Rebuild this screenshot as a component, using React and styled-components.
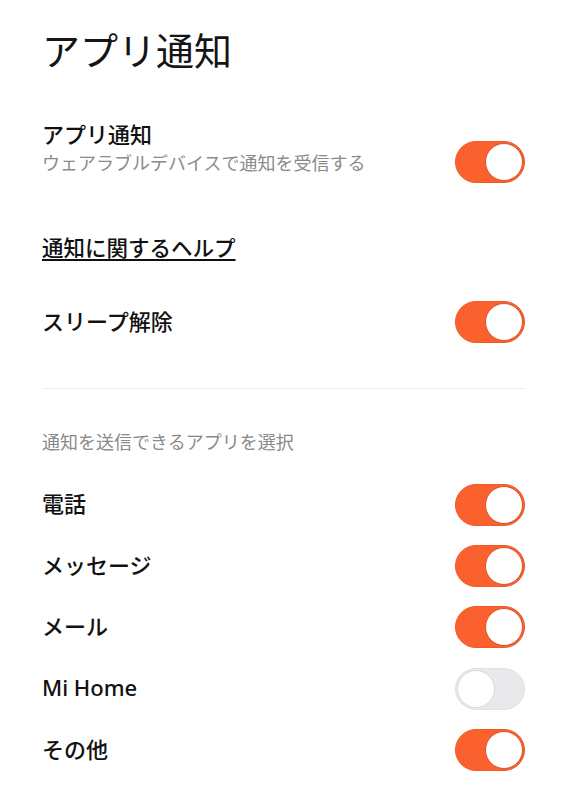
import React from "react";
import styled, { createGlobalStyle } from "styled-components";

const Global = createGlobalStyle`
  html, body { margin: 0; padding: 0; background: #ffffff; }
  body {
    font-family: "Noto Sans", "Noto Sans CJK JP", sans-serif;
    color: #111111;
    -webkit-font-smoothing: antialiased;
  }
`;

const Page = styled.div`
  width: 564px;
  min-height: 800px;
  box-sizing: border-box;
  padding: 26px 39px 0 42px;
  display: flex;
  flex-direction: column;
`;

const Title = styled.h1`
  margin: 0;
  font-size: 38px;
  line-height: 46px;
  font-weight: 400;
  color: #151515;
  font-family: "Noto Sans CJK JP", sans-serif;
`;

const Row = styled.div`
  display: flex;
  align-items: ${(p) => (p.$align === "end" ? "flex-end" : "center")};
  justify-content: space-between;
  margin-top: ${(p) => p.$mt || 0}px;
  min-height: ${(p) => p.$h || 0}px;
`;

const TextBlock = styled.div`
  display: flex;
  flex-direction: column;
`;

const Label = styled.div`
  font-family: "Noto Sans CJK JP", sans-serif;
  font-size: 22px;
  line-height: 32px;
  font-weight: 500;
  color: #111111;
  margin-bottom: ${(p) => p.$lift || 0}px;
`;

const ItemLabel = styled.div`
  font-family: "Noto Sans", "Noto Sans CJK JP", sans-serif;
  font-size: 22px;
  line-height: 32px;
  font-weight: 500;
  color: #111111;
  margin-bottom: 3px;
`;

const Sub = styled.div`
  font-family: "Noto Sans CJK JP", sans-serif;
  font-size: 18px;
  line-height: 26px;
  color: #8a8a8a;
  font-weight: 400;
`;

const HelpLink = styled.a`
  align-self: flex-start;
  margin-top: 56px;
  font-family: "Noto Sans CJK JP", sans-serif;
  font-size: 21.5px;
  line-height: 32px;
  font-weight: 500;
  color: #111111;
  text-decoration: underline;
  text-decoration-thickness: 2px;
  text-underline-offset: 3px;
  cursor: pointer;
`;

const Divider = styled.hr`
  margin: 45px 0 0 0;
  border: none;
  height: 1px;
  background: #eeeeee;
`;

const SectionHeader = styled.div`
  margin-top: 39px;
  font-family: "Noto Sans CJK JP", sans-serif;
  font-size: 18px;
  line-height: 26px;
  color: #8a8a8a;
`;

const List = styled.div`
  margin-top: 20px;
  display: flex;
  flex-direction: column;
`;

const ListRow = styled.div`
  display: flex;
  align-items: center;
  justify-content: space-between;
  height: 61.4px;
`;

const Track = styled.button`
  position: relative;
  flex: none;
  width: 70px;
  height: 42px;
  padding: 0;
  border-radius: 21px;
  border: 1px solid ${(p) => (p.$on ? "#ef5a28" : "#e2e2e4")};
  background: ${(p) => (p.$on ? "#fb612e" : "#e9e9eb")};
  box-sizing: border-box;
  cursor: pointer;
  margin-bottom: ${(p) => p.$mb || 0}px;
`;

const Knob = styled.span`
  position: absolute;
  top: 1px;
  ${(p) => (p.$on ? "right: 1px;" : "left: 1px;")}
  width: 38px;
  height: 38px;
  border-radius: 50%;
  background: #ffffff;
  box-sizing: border-box;
  border: 1.5px solid ${(p) => (p.$on ? "#d9542a" : "#d9d9db")};
`;

const Toggle = ({ on, mb }) => (
  <Track $on={on} $mb={mb} aria-pressed={on}>
    <Knob $on={on} />
  </Track>
);

const apps = [
  { name: "電話", on: true },
  { name: "メッセージ", on: true },
  { name: "メール", on: true },
  { name: "Mi Home", on: false },
  { name: "その他", on: true },
];

export default function App() {
  return (
    <>
      <Global />
      <Page>
        <Title>アプリ通知</Title>
        <Row $align="end" $mt={45}>
          <TextBlock>
            <Label>アプリ通知</Label>
            <Sub>ウェアラブルデバイスで通知を受信する</Sub>
          </TextBlock>
          <Toggle on mb={-8} />
        </Row>
        <HelpLink>通知に関するヘルプ</HelpLink>
        <Row $mt={38} $h={42}>
          <Label $lift={4}>スリープ解除</Label>
          <Toggle on />
        </Row>
        <Divider />
        <SectionHeader>通知を送信できるアプリを選択</SectionHeader>
        <List>
          {apps.map((a) => (
            <ListRow key={a.name}>
              <ItemLabel>{a.name}</ItemLabel>
              <Toggle on={a.on} />
            </ListRow>
          ))}
        </List>
      </Page>
    </>
  );
}
